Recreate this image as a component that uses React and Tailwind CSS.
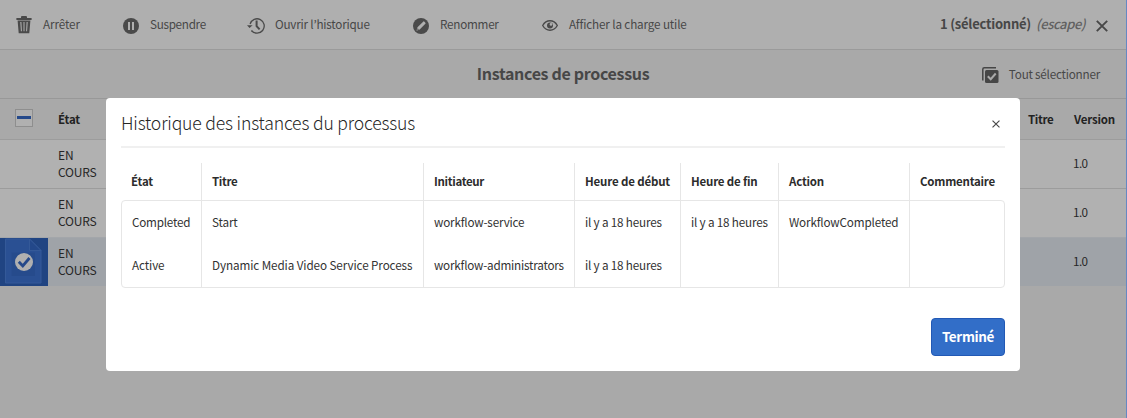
const TrashIcon = () => (
  <svg className="mt-px h-[18px] w-4 shrink-0" viewBox="0 0 16 18" fill="#4a4a4a">
    <path d="M5 2V.9C5 .4 5.4 0 5.9 0h4.2c.5 0 .9.4.9.9V2h4.6v2H.4V2H5zm1.100V2h3.8V1.100H6.100z" />
    <path fillRule="evenodd" d="M1.600 4.500h12.800L13.300 17.200H2.700L1.600 4.500zM4.300 6l.6 9.200h1L5.400 6H4.300zM7.500 6v9.200h1V6h-1zM10.600 6l-.5 9.200h1l.6-9.200h-1.100z" />
  </svg>
);

const PauseIcon = () => (
  <svg className="mt-[3px] size-4 shrink-0" viewBox="0 0 16 16">
    <circle cx="8" cy="8" r="8" fill="#4a4a4a" />
    <path d="M5 4h2v8H5zM9 4h2v8H9z" fill="#afafaf" />
  </svg>
);

const HistoryIcon = () => (
  <svg className="mt-[3px] h-4 w-[18px] shrink-0" viewBox="0 0 18 16" fill="none" stroke="#4a4a4a">
    <path d="M3.100 6A7.200 7.200 0 1 1 4.500 12.600" strokeWidth="1.300" />
    <path d="M4.500 12.600l1.300 1.300" strokeWidth="1.300" />
    <path d="M0 7.200h5.600L2.600 10z" fill="#4a4a4a" stroke="none" />
    <path d="M9.600 2.600v5.600l3 3.200" strokeWidth="2" />
  </svg>
);

const PencilIcon = () => (
  <svg className="mt-[3px] size-4 shrink-0" viewBox="0 0 16 16">
    <circle cx="8" cy="8" r="8" fill="#4a4a4a" />
    <path d="M3.500 12.700l1-3.400 5.900-5.900c.4-.4 2.600 1.700 2.200 2.200l-5.900 5.900-3.200 1.200z" fill="#afafaf" />
    <path d="M4.600 10.200l1.400 1.300-1.700.5z" fill="#4a4a4a" />
  </svg>
);

const EyeIcon = () => (
  <svg className="mt-[3px] h-[11px] w-4 shrink-0" viewBox="0 0 16 11">
    <path d="M.7 5.500C2.400 2.500 5 .8 8 .8s5.600 1.700 7.300 4.700C13.600 8.500 11 10.200 8 10.200S2.400 8.500.7 5.500z" fill="none" stroke="#4a4a4a" strokeWidth="1.400" />
    <circle cx="8" cy="5.500" r="3" fill="#4a4a4a" />
    <circle cx="9" cy="4.400" r="1.300" fill="#afafaf" />
  </svg>
);

const SelectAllIcon = () => (
  <svg className="mt-[3px] size-[17px] shrink-0" viewBox="0 0 17 17">
    <path d="M.8 13.500V2.300C.8 1.400 1.400.8 2.300.8h11.700" fill="none" stroke="#464646" strokeWidth="1.500" />
    <rect x="3" y="3" width="13.500" height="13" rx="1.500" fill="#464646" />
    <path d="M5.800 9.300l2.900 2.900 5-5.700" fill="none" stroke="#aaaaaa" strokeWidth="2" />
  </svg>
);

const Cross = ({ className, width }) => (
  <svg className={className} viewBox="0 0 12 12" stroke="#474747" strokeWidth={width}>
    <path d="M.8.8l10.400 10.400M11.200.8L.8 11.200" />
  </svg>
);

const PageThumb = () => (
  <svg className="size-12 shrink-0" viewBox="0 0 48 48">
    <rect width="48" height="48" fill="#204482" />
    <path d="M5.500 1h24L41 12.500V45H5.500z" fill="#2a5093" stroke="#345998" />
    <path d="M29.500 1v11.500H41z" fill="#23488a" stroke="#345998" />
    <path d="M11.500 14.500H35V38H11.500z" fill="#264b8c" />
    <circle cx="24" cy="24" r="9" fill="#b0b0b0" />
    <path d="M18.800 23.800l4 4.200 6.700-8" fill="none" stroke="#25498a" strokeWidth="2.800" />
  </svg>
);

const headCell = 'flex h-[37px] items-center pl-[10px] pt-px text-[11.5px] font-bold text-[#2c2c2c]';
const bodyCell = 'flex items-center pb-px pl-[10px] text-[11.7px] text-[#323232]';
const sep = 'border-r border-r-[#e6e6e6]';

function Row({ children, selected, last }) {
  return (
    <div className={`flex items-center ${selected ? 'h-12 bg-[#9fa3a8]' : 'h-[49px] border-b bg-[#b1b1b1]'} ${last ? 'border-[#a3a6aa]' : 'border-[#9c9c9c]'}`}>
      <div className="w-[58px] shrink-0">{children}</div>
      <div className="w-[46px] pb-[2px] text-[12px] leading-[17px] tracking-[-0.18px] whitespace-normal text-[#262626]">EN COURS</div>
      <div className="ml-auto w-[53px] pb-[2px] text-[11.7px] tracking-[-0.6px] text-[#262626]">1.0</div>
    </div>
  );
}

export default function App() {
  return (
    <div className="relative flex h-[418px] w-[1127px] flex-col overflow-hidden border-r border-[#6688c2] bg-[#a9a9a9] font-['Noto_Sans_CJK_KR',sans-serif] whitespace-nowrap">
      <header className="flex h-[50px] shrink-0 items-center border-b border-[#9a9a9a] bg-[#afafaf] pl-4 text-[11.7px] text-[#474747]">
        <div className="flex w-[107px] items-center gap-[11px]"><TrashIcon /><span className="pb-px tracking-[-0.11px]">Arrêter</span></div>
        <div className="flex w-[124px] items-center gap-[11px]"><PauseIcon /><span className="pb-px tracking-[-0.29px]">Suspendre</span></div>
        <div className="flex w-[166px] items-center gap-[10px]"><HistoryIcon /><span className="pb-px tracking-[-0.21px]">Ouvrir l’historique</span></div>
        <div className="flex w-[129px] items-center gap-[11px]"><PencilIcon /><span className="pb-px tracking-[-0.25px]">Renommer</span></div>
        <div className="flex items-center gap-[11px]"><EyeIcon /><span className="pb-px tracking-[-0.14px]">Afficher la charge utile</span></div>
        <div className="ml-auto flex items-center pr-[18px] text-[13px]">
          <span className="w-[96px] pb-[2px] font-bold tracking-[-0.24px]">1 (sélectionné)</span>
          <span className="w-[60px] pb-[2px] font-medium tracking-[-0.42px] text-[#606060] italic">(escape)</span>
          <Cross className="mt-[3px] size-3" width={1.900} />
        </div>
      </header>

      <div className="grid h-[49px] shrink-0 grid-cols-[1fr_auto_1fr] items-center border-b border-[#989898] text-[#474747]">
        <h1 className="col-start-2 pb-[2px] text-[16px] font-bold tracking-[-0.32px]">Instances de processus</h1>
        <div className="flex items-center gap-[10px] justify-self-end pr-[26px] text-[11.7px]">
          <SelectAllIcon /><span className="tracking-[-0.22px]">Tout sélectionner</span>
        </div>
      </div>

      <div className="flex h-[41px] shrink-0 items-center border-b border-[#9c9c9c] text-[11.5px] font-bold text-[#222222]">
        <div className="w-[58px] shrink-0 pb-[3px] pl-[15px]">
          <div className="flex size-[18px] items-center justify-center border border-[#8e8e8e] bg-[#b0b0b0] pb-px">
            <div className="h-[3px] w-[14px] bg-[#25498a]" />
          </div>
        </div>
        <span className="pt-[2px] tracking-[-0.18px]">État</span>
        <span className="ml-auto w-[46px] pt-[2px] tracking-[-0.32px]">Titre</span>
        <span className="w-[52px] pt-[2px] tracking-[-0.18px]">Version</span>
      </div>
      <Row />
      <Row last />
      <Row selected><PageThumb /></Row>

      <section className="absolute top-[98px] left-[106px] flex h-[273px] w-[914px] flex-col rounded bg-white px-[15px] pb-[15px]">
        <div className="flex h-[50px] shrink-0 items-center justify-between border-b-2 border-[#f0f0f0] pr-[5px]">
          <h2 className="pt-[2px] text-[17.6px] font-light tracking-[-0.17px] text-[#262626]">Historique des instances du processus</h2>
          <Cross className="mt-[3px] size-2" width={1.700} />
        </div>

        <div className="mt-[15px] grid shrink-0 grid-cols-[81px_222px_151px_106px_98px_131px_95px]">
          <div className={`${headCell} ${sep} tracking-[-0.18px]`}>État</div>
          <div className={`${headCell} ${sep} tracking-[-0.32px]`}>Titre</div>
          <div className={`${headCell} ${sep} tracking-[-0.32px]`}>Initiateur</div>
          <div className={`${headCell} ${sep} tracking-[-0.16px]`}>Heure de début</div>
          <div className={`${headCell} ${sep} tracking-[-0.18px]`}>Heure de fin</div>
          <div className={`${headCell} ${sep} tracking-[-0.2px]`}>Action</div>
          <div className={`${headCell} tracking-[-0.22px]`}>Commentaire</div>
        </div>
        <div className="grid h-[88px] shrink-0 grid-cols-[80px_222px_151px_106px_98px_131px_94px] grid-rows-2 rounded border border-[#e6e6e6]">
          <div className={`${bodyCell} ${sep} tracking-[-0.23px]`}>Completed</div>
          <div className={`${bodyCell} ${sep} tracking-[-0.15px]`}>Start</div>
          <div className={`${bodyCell} ${sep} tracking-[-0.18px]`}>workflow-service</div>
          <div className={`${bodyCell} ${sep} tracking-[-0.18px]`}>il y a 18 heures</div>
          <div className={`${bodyCell} ${sep} tracking-[-0.18px]`}>il y a 18 heures</div>
          <div className={`${bodyCell} ${sep} tracking-[-0.16px]`}>WorkflowCompleted</div>
          <div />
          <div className={`${bodyCell} ${sep} tracking-[-0.1px]`}>Active</div>
          <div className={`${bodyCell} ${sep} tracking-[-0.1px]`}>Dynamic Media Video Service Process</div>
          <div className={`${bodyCell} ${sep} tracking-[-0.21px]`}>workflow-administrators</div>
          <div className={`${bodyCell} ${sep} tracking-[-0.18px]`}>il y a 18 heures</div>
          <div className={sep} />
          <div className={sep} />
          <div />
        </div>

        <button className="mt-auto flex h-[38px] w-[74px] shrink-0 items-center justify-center self-end rounded border border-[#2259b5] bg-[#326ec8] pb-px text-[13.5px] font-bold tracking-[-0.35px] text-white">Terminé</button>
      </section>
    </div>
  );
}
